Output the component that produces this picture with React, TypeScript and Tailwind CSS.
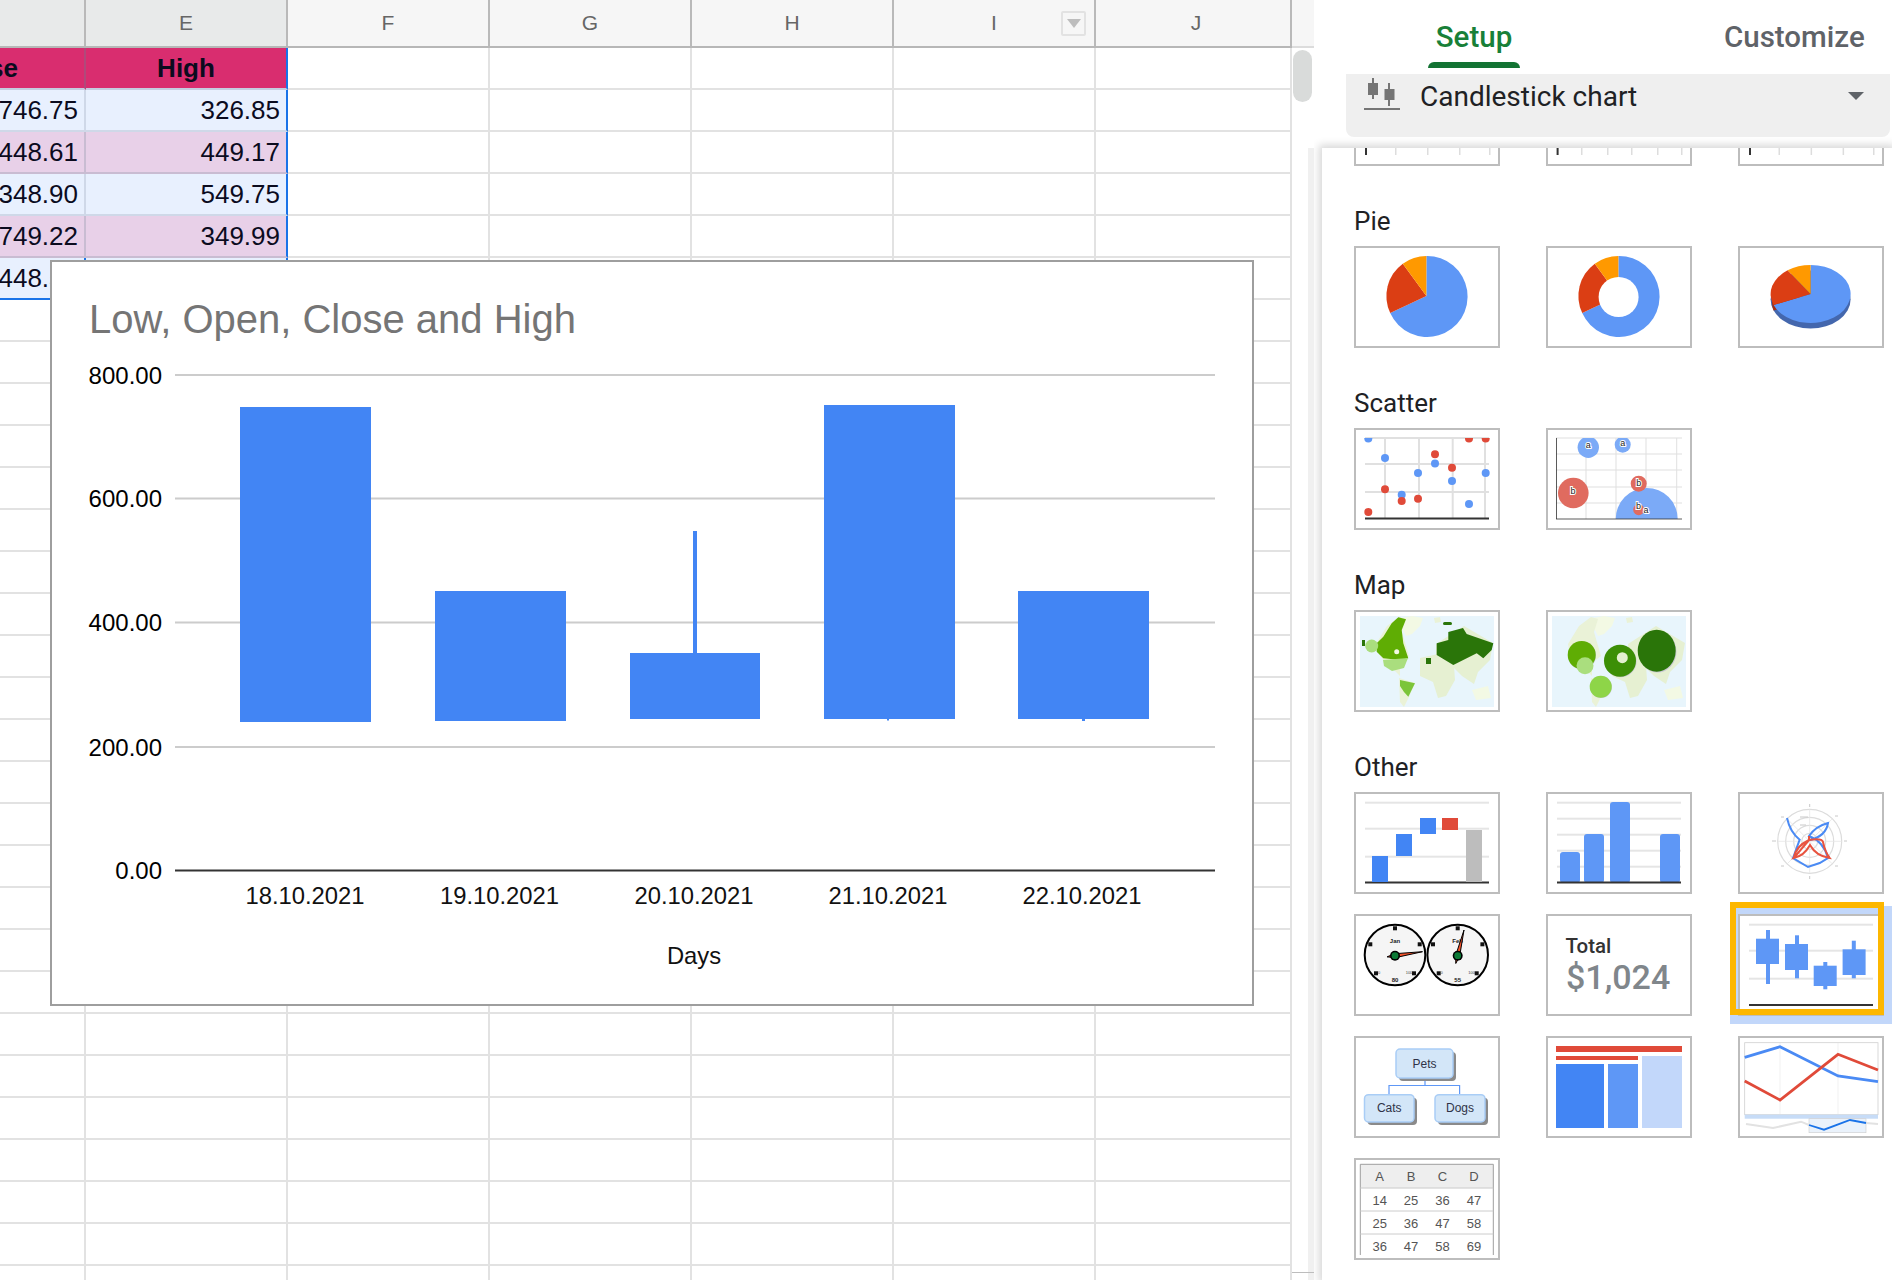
import type { ReactNode } from "react";

// --- spreadsheet data ---
const columns = ["", "E", "F", "G", "H", "I", "J"];
const dataRows = [
  { d: "746.75", e: "326.85", band: "bg-[#e8f0fe]", line: "border-[#cfd8e8]" },
  { d: "448.61", e: "449.17", band: "bg-[#e8d0e8]", line: "border-[#c9bcd2]" },
  { d: "348.90", e: "549.75", band: "bg-[#e8f0fe]", line: "border-[#cfd8e8]" },
  { d: "749.22", e: "349.99", band: "bg-[#e8d0e8]", line: "border-[#c9bcd2]" },
  { d: "448.50", e: "", band: "bg-[#e8f0fe]", line: "border-[#1a73e8]" },
];
const emptyRows = Array.from({ length: 24 }, (_, i) => i);
const blankCols = [0, 1, 2, 3, 4];
const widths = ["w-[202px]", "w-[202px]", "w-[202px]", "w-[202px]", "w-[196px]"];

function Row({ first, second }: { first?: ReactNode; second?: ReactNode }) {
  return (
    <div className="flex h-[42px]">
      {first ?? <div className="h-full w-[86px] shrink-0 border-r-2 border-b-2 border-[#e2e2e2]" />}
      {second ?? <div className="h-full w-[202px] shrink-0 border-r-2 border-b-2 border-[#e2e2e2]" />}
      {blankCols.map((c) => (
        <div key={c} className={`h-full shrink-0 border-r-2 border-b-2 border-[#e2e2e2] ${widths[c]}`} />
      ))}
    </div>
  );
}

function HeaderRow() {
  return (
    <div className="flex h-[48px] border-b-2 border-[#b7b7b7]">
      {columns.map((c, i) => (
        <div
          key={i}
          className={`relative flex h-full shrink-0 items-center justify-center border-r-2 border-[#b9b9b9] text-[21px] text-[#666666] ${
            i === 0 ? "w-[86px] bg-[#e8eaea]" : i === 1 ? "w-[202px] bg-[#e8eaea]" : i === 6 ? "w-[196px] bg-[#f6f6f6] pl-[6px]" : "w-[202px] bg-[#f6f6f6]"
          }`}
        >
          {c}
          {c === "I" && (
            <span className="absolute top-[11px] right-[8px] flex h-[25px] w-[25px] items-center justify-center rounded-[2px] border-2 border-[#e2e2e2]">
              <span className="h-0 w-0 border-x-[7px] border-t-[9px] border-x-transparent border-t-[#bdbdbd]" />
            </span>
          )}
        </div>
      ))}
    </div>
  );
}

function Sheet() {
  return (
    <div className="relative h-full w-[1292px] shrink-0 overflow-hidden bg-white font-['Liberation_Sans'] text-[26px] text-[#0b0b1e]">
      <HeaderRow />
      <Row
        first={
          <div className="flex h-full w-[86px] shrink-0 items-center justify-end overflow-hidden border-r-2 border-b-2 border-r-[#b0497a] border-b-[#c4cde0] bg-[#d92d6f] pt-[1px] font-bold">
            <span className="mr-[66px] shrink-0">Close</span>
          </div>
        }
        second={
          <div className="flex h-full w-[202px] shrink-0 items-center justify-center border-r-2 border-b-2 border-r-[#1a73e8] border-b-[#c4cde0] bg-[#d92d6f] pt-[1px] font-bold">
            High
          </div>
        }
      />
      {dataRows.map((r) => (
        <Row
          key={r.d}
          first={
            <div className={`flex h-full w-[86px] shrink-0 items-center justify-end overflow-hidden border-r-2 border-b-2 pt-[1px] pr-[6px] ${r.band} ${r.line}`}>
              {r.d}
            </div>
          }
          second={
            <div className={`flex h-full w-[202px] shrink-0 items-center justify-end border-r-2 border-b-2 border-r-[#1a73e8] pt-[1px] pr-[6px] ${r.band} ${r.line}`}>
              {r.e}
            </div>
          }
        />
      ))}
      {emptyRows.map((i) => (
        <Row key={i} />
      ))}
      <ChartOverlay />
    </div>
  );
}

// --- big chart on top of the sheet ---
const gridY = [375, 498.5, 622.5, 747];
const yLabels = [
  { y: 375, t: "800.00" },
  { y: 498.5, t: "600.00" },
  { y: 622.5, t: "400.00" },
  { y: 747, t: "200.00" },
  { y: 870.5, t: "0.00" },
];
const candles = [
  { x: 240, w: 131, y: 407, h: 315, label: "18.10.2021", cx: 305 },
  { x: 435, w: 131, y: 591, h: 130, label: "19.10.2021", cx: 499.5 },
  { x: 630, w: 130, y: 653, h: 66, label: "20.10.2021", cx: 694 },
  { x: 824, w: 131, y: 405, h: 314, label: "21.10.2021", cx: 888 },
  { x: 1018, w: 131, y: 591, h: 128, label: "22.10.2021", cx: 1082 },
];

function ChartOverlay() {
  return (
    <div className="absolute top-[260px] left-[50px] h-[746px] w-[1204px] border-2 border-[#9e9e9e] bg-white">
      <svg viewBox="52 262 1200 742" className="block h-full w-full font-['Liberation_Sans']">
        <text x="89" y="333" fontSize="40" fill="#757575">Low, Open, Close and High</text>
        {gridY.map((y) => (
          <line key={y} x1="175" x2="1215" y1={y} y2={y} stroke="#cccccc" strokeWidth="2" />
        ))}
        <line x1="175" x2="1215" y1="870.5" y2="870.5" stroke="#333333" strokeWidth="2" />
        {yLabels.map((l) => (
          <text key={l.t} x="162" y={l.y + 8.5} fontSize="24" textAnchor="end" fill="#000000">{l.t}</text>
        ))}
        <rect x="693" y="531" width="4" height="122" fill="#4285f4" />
        <rect x="887" y="719" width="2" height="1.5" fill="#4285f4" />
        <rect x="1082" y="719" width="3" height="2" fill="#4285f4" />
        {candles.map((c) => (
          <g key={c.label}>
            <rect x={c.x} y={c.y} width={c.w} height={c.h} fill="#4285f4" />
            <text x={c.cx} y="904" fontSize="23.8" textAnchor="middle" fill="#111111">{c.label}</text>
          </g>
        ))}
        <text x="694" y="964" fontSize="23.8" textAnchor="middle" fill="#111111">Days</text>
      </svg>
    </div>
  );
}

// --- thumbnails ---
function Thumb({ children }: { children: ReactNode }) {
  return (
    <div className="relative z-10 h-[102px] w-[146px] border-2 border-[#bdbdbd] bg-white">
      <svg viewBox="2 2 142 98" className="block h-full w-full font-['Liberation_Sans']">
        {children}
      </svg>
    </div>
  );
}

function PartialThumb({ ticks, dark }: { ticks: number[]; dark: number }) {
  return (
    <div className="h-[18px] w-[146px] border-x-2 border-b-2 border-[#bdbdbd] bg-white">
      <svg viewBox="2 0 142 16" className="block h-full w-full">
        <rect x={dark} y="0" width="2" height="7" fill="#333333" />
        {ticks.map((t) => (
          <rect key={t} x={t} y="0" width="1.5" height="7" fill="#dddddd" />
        ))}
      </svg>
    </div>
  );
}

function PieFlat() {
  return (
    <>
      <path d="M72.4 50 L72.4 10 A40.5 40.5 0 1 1 36.2 67.1 Z" fill="#5e97f6" />
      <path d="M72.4 50 L36.2 67.1 A40 40 0 0 1 48.8 17.7 Z" fill="#db3e14" />
      <path d="M72.4 50 L48.8 17.7 A40 40 0 0 1 72.4 10 Z" fill="#ff9900" />
    </>
  );
}

function PieDonut() {
  return (
    <>
      <PieFlat />
      <circle cx="72.6" cy="51" r="20" fill="#ffffff" />
    </>
  );
}

function Pie3d() {
  return (
    <>
      <ellipse cx="72.6" cy="53.5" rx="40" ry="29" fill="#4467ad" />
      <path d="M72.6 53 L35.6 64.5 A40 29 0 0 1 36 48 Z" fill="#a52b0e" />
      <path d="M72.6 48 L72.6 19 A40 29 0 1 1 35.6 59 Z" fill="#5e97f6" />
      <path d="M72.6 48 L35.6 59 A40 29 0 0 1 49.6 24.3 Z" fill="#db3e14" />
      <path d="M72.6 48 L49.6 24.3 A40 29 0 0 1 72.6 19 Z" fill="#ff9900" />
    </>
  );
}

const scatterBlue = [[14.3, 10.6], [31, 30], [64, 45], [81, 35.6], [98, 53], [131.7, 45], [47.7, 66.7], [115, 76]];
const scatterRed = [[115, 10.6], [131.7, 10.6], [81, 26.3], [98, 39.7], [31, 61.3], [47.7, 73], [64, 70.7], [14.3, 84]];

function Scatter() {
  return (
    <>
      <clipPath id="scatter-clip"><rect x="8" y="10" width="130" height="84" /></clipPath>
      {[10, 36, 64].map((y) => <rect key={y} x="11" y={y - 1} width="124" height="2" fill="#e0e0e0" />)}
      {[31, 65, 98.7, 131].map((x) => <rect key={x} x={x - 1} y="10" width="2" height="80" fill="#e0e0e0" />)}
      <rect x="11" y="89.5" width="124" height="2" fill="#333333" />
      <g clipPath="url(#scatter-clip)">
        {scatterBlue.map(([x, y]) => <circle key={`${x}-${y}`} cx={x} cy={y} r="4" fill="#5e97f6" />)}
        {scatterRed.map(([x, y]) => <circle key={`${x}-${y}`} cx={x} cy={y} r="4" fill="#e04a39" />)}
      </g>
    </>
  );
}

function BubbleLabel({ x, y, t }: { x: number; y: number; t: string }) {
  return (
    <text x={x} y={y} fontSize="9" textAnchor="middle" fill="#222222" stroke="#ffffff" strokeWidth="2" paintOrder="stroke">
      {t}
    </text>
  );
}

function Bubble() {
  return (
    <>
      <clipPath id="bubble-clip"><rect x="10" y="10" width="126" height="81" /></clipPath>
      {[10, 26, 42, 59, 75].map((y) => <rect key={y} x="10" y={y - 0.5} width="126" height="1" fill="#e0e0e0" />)}
      {[40, 70, 100, 130.7].map((x) => <rect key={x} x={x - 0.5} y="10" width="1" height="81" fill="#e0e0e0" />)}
      <g clipPath="url(#bubble-clip)">
        <circle cx="42.3" cy="19.3" r="10.7" fill="#7baaf7" />
        <circle cx="76.7" cy="16.7" r="8" fill="#7baaf7" />
        <circle cx="100.7" cy="91" r="31" fill="#7baaf7" />
        <circle cx="27.3" cy="65" r="15.3" fill="#e06b5f" />
        <circle cx="92.7" cy="55.7" r="8" fill="#e06b5f" />
        <circle cx="92.7" cy="81.7" r="5.5" fill="#e06b5f" />
      </g>
      <rect x="10" y="10" width="0.8" height="81" fill="#333333" />
      <rect x="10" y="90.6" width="126" height="0.8" fill="#333333" />
      <BubbleLabel x={42.3} y={20} t="a" />
      <BubbleLabel x={76.7} y={17.5} t="a" />
      <BubbleLabel x={27} y={66} t="b" />
      <BubbleLabel x={92.7} y={57.5} t="b" />
      <BubbleLabel x={92.5} y={81} t="b" />
      <BubbleLabel x={100} y={85} t="a" />
    </>
  );
}

function PaleLand() {
  return (
    <>
      <rect x="6" y="6" width="134" height="91" fill="#e8f5fc" />
      <path d="M47 8 L58 6 L69 8 L66 16 L58 24 L52 26 L47 16 Z" fill="#f3f9e4" />
      <path d="M80 8 L86 7 L87 12 L81 13 Z" fill="#eaf2d7" />
      <path d="M22 34 L33 16 L45 7 L52 9 L48 22 L55 46 L46 53 L46 66 L38 58 L29 50 L23 40 Z" fill="#eaf2d7" />
      <path d="M45 68 L61 73 L55 87 L50 97 L46 92 Z" fill="#eaf2d7" />
      <path d="M66 48 L84 44 L100 56 L101 70 L92 86 L84 88 L79 72 L66 66 Z" fill="#e6f0d2" />
      <path d="M82 34 L110 16 L139 33 L136 50 L124 62 L120 74 L108 66 L100 58 L82 46 Z" fill="#e6f0d2" />
      <path d="M118 80 L134 76 L137 88 L122 90 Z" fill="#f3f9e4" />
    </>
  );
}

function GeoMap() {
  return (
    <>
      <PaleLand />
      <path d="M22.7 33.3 L29.3 26.7 L37.7 13.3 L44.3 7.3 L52 9.3 L47.7 20 L49.3 33.3 L54.3 48.3 L46 50 L29.3 48.3 L22.7 41.7 Z" fill="#5fad04" />
      <circle cx="42.7" cy="41.7" r="2.5" fill="#f3f9e4" />
      <circle cx="17.7" cy="36" r="6.5" fill="#aade7e" />
      <rect x="8" y="30" width="3" height="6" fill="#2a7509" />
      <path d="M29 50 L54 48 L50 58 L38 61 L30 56 Z" fill="#aade7e" />
      <path d="M46 70 L61 73.3 L54.3 86.7 L50 82 L46 76 Z" fill="#7cc53a" />
      <path d="M82.7 33.3 L94.3 30 L94.3 22 L109 18 L112.7 24 L139.3 33.3 L137.7 40 L129.3 48.3 L122.7 43.3 L99.3 55 L82.7 45 Z" fill="#2a7509" />
      <rect x="72" y="48" width="5" height="6" fill="#2a7509" />
      <rect x="89" y="12" width="9" height="3" rx="1.5" fill="#2a7509" />
    </>
  );
}

function GeoBubbles() {
  return (
    <>
      <PaleLand />
      <circle cx="36" cy="45.5" r="14" fill="#c9c9d2" />
      <circle cx="35.7" cy="45" r="14" fill="#5fad04" />
      <circle cx="39" cy="55.7" r="8.5" fill="#aade7e" />
      <circle cx="55" cy="77" r="11" fill="#c9c9d2" />
      <circle cx="54.7" cy="76.7" r="11" fill="#8ed548" />
      <circle cx="74.6" cy="51.3" r="16" fill="#c9c9d2" />
      <circle cx="74" cy="50.7" r="16" fill="#3c8f06" />
      <circle cx="76.3" cy="47.7" r="5.5" fill="#e3efd0" />
      <ellipse cx="111.5" cy="41.5" rx="19" ry="21" fill="#c9c9d2" />
      <ellipse cx="110.7" cy="40.7" rx="19" ry="21" fill="#2a7509" />
    </>
  );
}

function Waterfall() {
  return (
    <>
      {[10.7, 36.7, 64.7].map((y) => <rect key={y} x="11" y={y - 1} width="124" height="2" fill="#e5e5e5" />)}
      <rect x="11" y="89.5" width="124" height="2" fill="#333333" />
      <rect x="18" y="64" width="16" height="26" fill="#4285f4" />
      <rect x="42" y="42" width="16" height="22" fill="#4285f4" />
      <rect x="66" y="26" width="16" height="16" fill="#4285f4" />
      <rect x="88" y="26" width="16" height="12" fill="#e04a39" />
      <rect x="112" y="38" width="16" height="52" fill="#bdbdbd" />
    </>
  );
}

function Columns() {
  return (
    <>
      {[10.7, 26.7, 42.7, 58.7, 74.7].map((y) => <rect key={y} x="11" y={y - 1} width="124" height="2" fill="#e5e5e5" />)}
      <rect x="14" y="60" width="20" height="31" rx="3" fill="#5e97f6" />
      <rect x="38" y="42" width="20" height="49" rx="3" fill="#5e97f6" />
      <rect x="64" y="10" width="20" height="81" rx="3" fill="#5e97f6" />
      <rect x="114" y="42" width="20" height="49" rx="3" fill="#5e97f6" />
      <rect x="11" y="89.5" width="124" height="2" fill="#333333" />
    </>
  );
}

function Radar() {
  return (
    <g>
      {[32, 24, 16, 8].map((r) => <circle key={r} cx="71.7" cy="49.3" r={r} fill="none" stroke="#dcdcdc" strokeWidth="1.2" />)}
      <path d="M71.7 17.3 V81.3 M39.7 49.3 H103.7 M49 26.7 L94.4 72 M49 72 L94.4 26.7" stroke="#e6e6e6" strokeWidth="0.8" fill="none" />
      <path d="M71.7 12 v3 M38 49 h-4 M106 49 h3 M46 25 h-3 M97 24 h3 M46 74 h-3 M97 74 h3 M71.7 84 v3 M62 33 h6 M62 25 h8" stroke="#c8c8c8" strokeWidth="1" fill="none" />
      <path d="M49 26 Q52 40 61.7 47.7 L55 66 L70 75 L81.7 71 L90 66 Q86 50 71 44 Q78 34 90 31 Q88 44 72 48" fill="none" stroke="#4a8af4" strokeWidth="2" />
      <path d="M55.7 66 Q58 54 71 48 L71 44 M71 48 Q84 46 85 50 Q87 60 91.7 66 Q78 64 72 53 Q66 64 55.7 66 Z" fill="none" stroke="#e8533f" strokeWidth="2" />
    </g>
  );
}

const gaugeTicks = [[0, -26.7], [-24.7, -10.7], [24.7, -10.7], [-19, 18.3], [19, 18.3]];

function Gauge({ cx, name, value, tip }: { cx: number; name: string; value: string; tip: [number, number] }) {
  const cy = 41.7;
  const dx = tip[0] - cx;
  const dy = tip[1] - cy;
  const len = Math.hypot(dx, dy);
  const ux = dx / len;
  const uy = dy / len;
  const needle = `${tip[0]},${tip[1]} ${cx - uy * 2},${cy + ux * 2} ${cx - ux * 8},${cy - uy * 8} ${cx + uy * 2},${cy - ux * 2}`;
  return (
    <g>
      <circle cx={cx} cy={cy - 0.7} r="30.3" fill="#f5f5f5" stroke="#000000" strokeWidth="2" />
      {gaugeTicks.map(([x, y]) => <rect key={`${x}-${y}`} x={cx + x - 2} y={cy - 0.7 + y - 2} width="4" height="4" fill="#111111" />)}
      <text x={cx} y={cy - 13} fontSize="6" fontWeight="bold" textAnchor="middle" fill="#222222">{name}</text>
      <text x={cx} y={cy + 26} fontSize="6" fontWeight="bold" textAnchor="middle" fill="#222222">{value}</text>
      <text x={cx - 16} y={cy + 18} fontSize="4" textAnchor="middle" fill="#444444">0</text>
      <text x={cx + 14} y={cy + 18} fontSize="4" textAnchor="middle" fill="#444444">100</text>
      <polygon points={needle} fill="#f4532b" stroke="#000000" strokeWidth="1" />
      <circle cx={cx} cy={cy} r="5" fill="#000000" />
      <circle cx={cx} cy={cy} r="3.4" fill="#0c7a36" />
    </g>
  );
}

function Gauges() {
  return (
    <>
      <Gauge cx={41} name="Jan" value="80" tip={[68.5, 37.7]} />
      <Gauge cx={103.7} name="Feb" value="55" tip={[110, 16]} />
    </>
  );
}

function Scorecard() {
  return (
    <>
      <text x="19.5" y="39" fontSize="20.5" fontWeight="500" fill="#333333" className="font-['Roboto']">Total</text>
      <text x="20" y="75" fontSize="34" fontWeight="500" fill="#80868b" className="font-['Roboto']">$1,024</text>
    </>
  );
}

const candleThumb = [
  { wx: 30, wy: 16, wh: 54, bx: 18, by: 24.7, bh: 25.3 },
  { wx: 59, wy: 21.3, wh: 43, bx: 47, by: 30, bh: 26 },
  { wx: 87.3, wy: 48, wh: 27.3, bx: 75.7, by: 51.7, bh: 20.3 },
  { wx: 115.8, wy: 26.7, wh: 37.6, bx: 104.6, by: 35.3, bh: 25.7 },
];

function CandleThumb() {
  return (
    <>
      {[10.7, 36.7, 64.7].map((y) => <rect key={y} x="11" y={y - 1} width="124" height="2" fill="#e5e5e5" />)}
      <rect x="11" y="90" width="124" height="2" fill="#333333" />
      {candleThumb.map((c) => (
        <g key={c.wx} fill="#5e97f6">
          <rect x={c.wx - 2} y={c.wy} width="4" height={c.wh} />
          <rect x={c.bx} y={c.by} width="23" height={c.bh} />
        </g>
      ))}
    </>
  );
}

function OrgBox({ x, y, w, h, t }: { x: number; y: number; w: number; h: number; t: string }) {
  return (
    <g>
      <rect x={x + 3} y={y + 3} width={w} height={h} rx="4" fill="#8a8a8a" />
      <rect x={x} y={y} width={w} height={h} rx="4" fill="#d3e6f8" stroke="#a9cdf6" strokeWidth="1.5" />
      <text x={x + w / 2} y={y + h / 2 + 4} fontSize="12" textAnchor="middle" fill="#2f3347">{t}</text>
    </g>
  );
}

function OrgChart() {
  return (
    <>
      <path d="M71 42 V49.5 M35 58 V49.5 H105.6 V58" fill="none" stroke="#5e97f6" strokeWidth="1.2" />
      <OrgBox x={42} y={13} w={57} h={29} t="Pets" />
      <OrgBox x={10.5} y={58.7} w={49.5} h={27.3} t="Cats" />
      <OrgBox x={81} y={58.7} w={50} h={27.3} t="Dogs" />
    </>
  );
}

function Treemap() {
  return (
    <>
      <rect x="10" y="10" width="126" height="6" fill="#e04a39" />
      <rect x="10" y="20" width="82" height="4" fill="#e04a39" />
      <rect x="10" y="28" width="48" height="64" fill="#4285f4" />
      <rect x="62" y="28" width="30" height="64" fill="#5e97f6" />
      <rect x="96" y="20" width="40" height="72" fill="#c2d7fa" />
    </>
  );
}

function Timeline() {
  return (
    <>
      <rect x="6.7" y="6.7" width="133.3" height="72" fill="#ffffff" stroke="#cfcfcf" strokeWidth="0.8" />
      <line x1="42" x2="42" y1="7" y2="78" stroke="#eeeeee" strokeWidth="0.8" />
      <line x1="100" x2="100" y1="7" y2="78" stroke="#eeeeee" strokeWidth="0.8" />
      <polyline points="6.7,21.3 42,10.7 100,40 140,45.7" fill="none" stroke="#4a8af4" strokeWidth="2.8" />
      <polyline points="6.7,45 42,64 100,18.3 140,34" fill="none" stroke="#e04a39" strokeWidth="2.8" />
      <rect x="6.7" y="78.7" width="133.3" height="4" fill="#c7dcf7" />
      <rect x="71" y="82.7" width="57" height="14" fill="#eaf2fb" stroke="#cccccc" strokeWidth="0.6" />
      <polyline points="8,88 35,92 63,85.7 71,89" fill="none" stroke="#e2e2e2" strokeWidth="2" />
      <polyline points="128,87 140,88" fill="none" stroke="#e2e2e2" strokeWidth="2" />
      <polyline points="71,89 86,93.7 112,84 128,87" fill="none" stroke="#1a73e8" strokeWidth="1.8" />
    </>
  );
}

const tableCols = [25.7, 57, 88.5, 120];
const tableRows = [
  { y: 23, v: ["A", "B", "C", "D"] },
  { y: 46.5, v: ["14", "25", "36", "47"] },
  { y: 69.5, v: ["25", "36", "47", "58"] },
  { y: 92.5, v: ["36", "47", "58", "69"] },
];

function TableThumb() {
  return (
    <>
      <rect x="6.3" y="6.3" width="133" height="24" fill="#eeeeee" />
      <path d="M6.3 97 V6.3 H139.3 V97" fill="none" stroke="#9e9e9e" strokeWidth="1" />
      {[30, 53, 76].map((y) => <line key={y} x1="6.3" x2="139.3" y1={y} y2={y} stroke="#cccccc" strokeWidth="1" />)}
      {tableRows.map((r) =>
        r.v.map((t, i) => (
          <text key={`${r.y}-${i}`} x={tableCols[i]} y={r.y} fontSize="13" textAnchor="middle" fill="#555555">{t}</text>
        ))
      )}
    </>
  );
}

function Section({ title, children }: { title: string; children: ReactNode }) {
  return (
    <section className="mt-10">
      <h3 className="mb-[10px] h-[30px] font-['Roboto'] text-[26px] leading-[30px] font-normal text-[#202124]">{title}</h3>
      <div className="grid grid-cols-[146px_146px_146px] gap-x-[46px] gap-y-[20px]">{children}</div>
    </section>
  );
}

function CandlestickIcon() {
  return (
    <svg viewBox="0 0 36 32" className="h-[32px] w-[36px] shrink-0" fill="#757575">
      <rect x="8" y="0" width="2" height="21" />
      <rect x="4" y="5" width="10" height="12" />
      <rect x="24" y="5" width="2" height="23" />
      <rect x="20.5" y="11" width="10" height="11" />
      <rect x="0" y="30" width="36" height="2" />
    </svg>
  );
}

function Sidebar() {
  return (
    <div className="flex h-full min-w-0 flex-1 overflow-hidden">
      <div className="relative h-full w-[22px] shrink-0 bg-white">
        <div className="h-[46px] bg-[#f6f6f6]" />
        <div className="h-[2px] bg-[#dcdcdc]" />
        <div className="mt-[2px] ml-[1px] h-[52px] w-[19px] rounded-full bg-[#d9dbda]" />
        <div className="absolute top-[148px] right-0 bottom-0 w-[6px] bg-[#f0f0f0]" />
        <div className="absolute right-0 bottom-[7px] left-0 h-[1px] bg-[#bdbdbd]" />
      </div>
      <div className="flex h-full min-w-0 flex-1 flex-col bg-white">
        <div className="flex h-[74px] shrink-0 font-['Roboto'] text-[29.5px] font-medium">
          <div className="ml-[114px] flex w-[92px] flex-col items-center">
            <div className="flex h-[62px] items-center pt-[12px] text-[#188038]">Setup</div>
            <div className="h-[6px] w-full rounded-t-[6px] bg-[#137333]" />
          </div>
          <div className="ml-[204px] flex h-[62px] items-center pt-[12px] text-[#5f6368]">Customize</div>
        </div>
        <div className="relative z-20 mr-[2px] ml-[32px] flex h-[63px] shrink-0 items-start rounded-b-[8px] bg-[#efefef] pt-[4px] pl-[18px]">
          <CandlestickIcon />
          <span className="mt-[1px] ml-[20px] font-['Roboto'] text-[28px] leading-[36px] text-[#202124]">Candlestick chart</span>
          <span className="mt-[14px] mr-[26px] ml-auto h-0 w-0 border-x-[8px] border-t-[8px] border-x-transparent border-t-[#5f6368]" />
        </div>
        <div className="mt-[11px] ml-[8px] min-h-0 flex-1 overflow-hidden bg-white pl-[32px] shadow-[0_0_8px_3px_rgba(0,0,0,0.16)]">
          <div className="grid grid-cols-[146px_146px_146px] gap-x-[46px]">
            <PartialThumb dark={11} ticks={[41, 73, 105, 135]} />
            <PartialThumb dark={10.6} ticks={[35, 61, 85, 111, 135]} />
            <PartialThumb dark={11} ticks={[40.5, 72.6, 104.6, 135]} />
          </div>
          <Section title="Pie">
            <Thumb><PieFlat /></Thumb>
            <Thumb><PieDonut /></Thumb>
            <Thumb><Pie3d /></Thumb>
          </Section>
          <Section title="Scatter">
            <Thumb><Scatter /></Thumb>
            <Thumb><Bubble /></Thumb>
          </Section>
          <Section title="Map">
            <Thumb><GeoMap /></Thumb>
            <Thumb><GeoBubbles /></Thumb>
          </Section>
          <Section title="Other">
            <Thumb><Waterfall /></Thumb>
            <Thumb><Columns /></Thumb>
            <Thumb><Radar /></Thumb>
            <Thumb><Gauges /></Thumb>
            <Thumb><Scorecard /></Thumb>
            <div className="relative">
              <div className="absolute -top-[8px] -left-[8px] h-[118px] w-[162px] bg-[#c2d7fa]" />
              <Thumb><CandleThumb /></Thumb>
              <div className="absolute -top-[12px] -left-[8px] z-20 h-[113px] w-[154px] border-[6px] border-[#fdb700]" />
            </div>
            <Thumb><OrgChart /></Thumb>
            <Thumb><Treemap /></Thumb>
            <Thumb><Timeline /></Thumb>
            <Thumb><TableThumb /></Thumb>
          </Section>
        </div>
      </div>
    </div>
  );
}

export default function App() {
  return (
    <div className="flex h-screen w-screen overflow-hidden bg-white">
      <Sheet />
      <Sidebar />
    </div>
  );
}
